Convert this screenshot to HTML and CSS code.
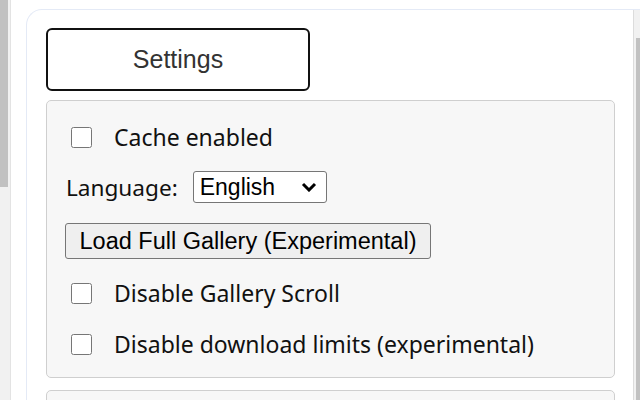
FILE: index.html
```html
<!DOCTYPE html>
<html>
<head>
    <title>Settings</title>
    <link rel="stylesheet" href="styles.css">
</head>
<body>
    <div class="side-scroll">
        <div class="side-thumb"></div>
    </div>
    <div class="page">
        <div class="card">
            <div class="card-body">
                <button class="tab-button">Settings</button>

                <div class="panel">
                    <div class="row check-row">
                        <input type="checkbox" id="cache">
                        <label for="cache">Cache enabled</label>
                    </div>
                    <div class="row lang-row">
                        <span class="lang-label">Language:</span>
                        <span class="select-wrap">
                            <select class="lang-select">
                                <option>English</option>
                            </select>
                            <svg class="chevron" width="16" height="10" viewBox="0 0 16 10">
                                <path d="M2 2 L8 8 L14 2" fill="none" stroke="#000" stroke-width="3"/>
                            </svg>
                        </span>
                    </div>
                    <div class="row load-row">
                        <button class="load-button">Load Full Gallery (Experimental)</button>
                    </div>
                    <div class="row check-row scroll-row">
                        <input type="checkbox" id="noscroll">
                        <label for="noscroll">Disable Gallery Scroll</label>
                    </div>
                    <div class="row check-row limits-row">
                        <input type="checkbox" id="nolimits">
                        <label for="nolimits">Disable download limits (experimental)</label>
                    </div>
                </div>

                <div class="panel next-panel"></div>
            </div>
            <div class="card-scroll">
                <div class="card-thumb"></div>
            </div>
        </div>
    </div>
</body>
</html>
```

FILE: styles.css
```css
html, body {
    height: 100%;
}

body {
    margin: 0;
    display: flex;
    overflow: hidden;
    background-color: #fff;
    font-family: "Liberation Sans", Arial, sans-serif;
}

/* barra de desplazamiento izquierda */
.side-scroll {
    width: 10px;
    flex-shrink: 0;
    background-color: #f1f1f1;
    border-right: 1px solid #e3e3e3;
}

.side-thumb {
    width: 8px;
    height: 187px;
    background-color: #c1c1c1;
}

.page {
    flex: 1;
    padding: 9px 0 0 15px;
    min-width: 0;
}

.card {
    display: flex;
    height: 100%;
    border-top: 1px solid #e4eaf6;
    border-left: 1px solid #e4eaf6;
    border-top-left-radius: 16px;
    overflow: hidden;
}

.card-body {
    flex: 1;
    padding: 18px 18px 0 19px;
    min-width: 0;
}

.card-scroll {
    width: 6px;
    flex-shrink: 0;
    background-color: #f1f1f1;
    border-left: 1px solid #dcdcdc;
}

.card-thumb {
    margin-top: 28px;
    margin-left: 2px;
    height: 400px;
    background-color: #c1c1c1;
}

.tab-button {
    display: block;
    width: 264px;
    height: 63px;
    background-color: #fff;
    border: 2px solid #111;
    border-radius: 6px;
    color: #333;
    font-family: "Liberation Sans", Arial, sans-serif;
    font-size: 25px;
    padding: 0;
}

.panel {
    margin-top: 9px;
    background-color: #f7f7f7;
    border: 1px solid #cfcfcf;
    border-radius: 5px;
    padding: 21px 18px 18px 18px;
}

.next-panel {
    margin-top: 12px;
    height: 40px;
}

.row {
    display: flex;
    align-items: center;
}

.check-row {
    height: 30px;
}

.lang-row {
    height: 32px;
    margin-top: 19px;
}

.load-row {
    margin-top: 20px;
}

.scroll-row {
    margin-top: 19px;
}

.limits-row {
    margin-top: 21px;
}

.check-row input {
    width: 21px;
    height: 21px;
    margin: 0 0 0 6px;
}

.check-row label {
    margin-left: 22px;
    font-family: "Noto Sans", sans-serif;
    font-size: 23px;
    color: #111;
}

.lang-label {
    font-family: "Noto Sans", sans-serif;
    font-size: 22.6px;
    color: #111;
    margin-left: 1px;
}

.select-wrap {
    position: relative;
    margin-left: 15px;
    display: flex;
}

.lang-select {
    width: 134px;
    height: 32px;
    font-family: "Liberation Sans", Arial, sans-serif;
    font-size: 23px;
    color: #000;
    background-color: #fff;
    border: 1px solid #767676;
    border-radius: 3px;
    padding: 0 6px;
    appearance: none;
}

.chevron {
    position: absolute;
    right: 10px;
    top: 11px;
    pointer-events: none;
}

.load-button {
    height: 36px;
    width: 366px;
    font-family: "Liberation Sans", Arial, sans-serif;
    font-size: 23.5px;
    color: #000;
    background-color: #efefef;
    border: 1px solid #767676;
    border-radius: 3px;
    padding: 0 6px;
}
```
